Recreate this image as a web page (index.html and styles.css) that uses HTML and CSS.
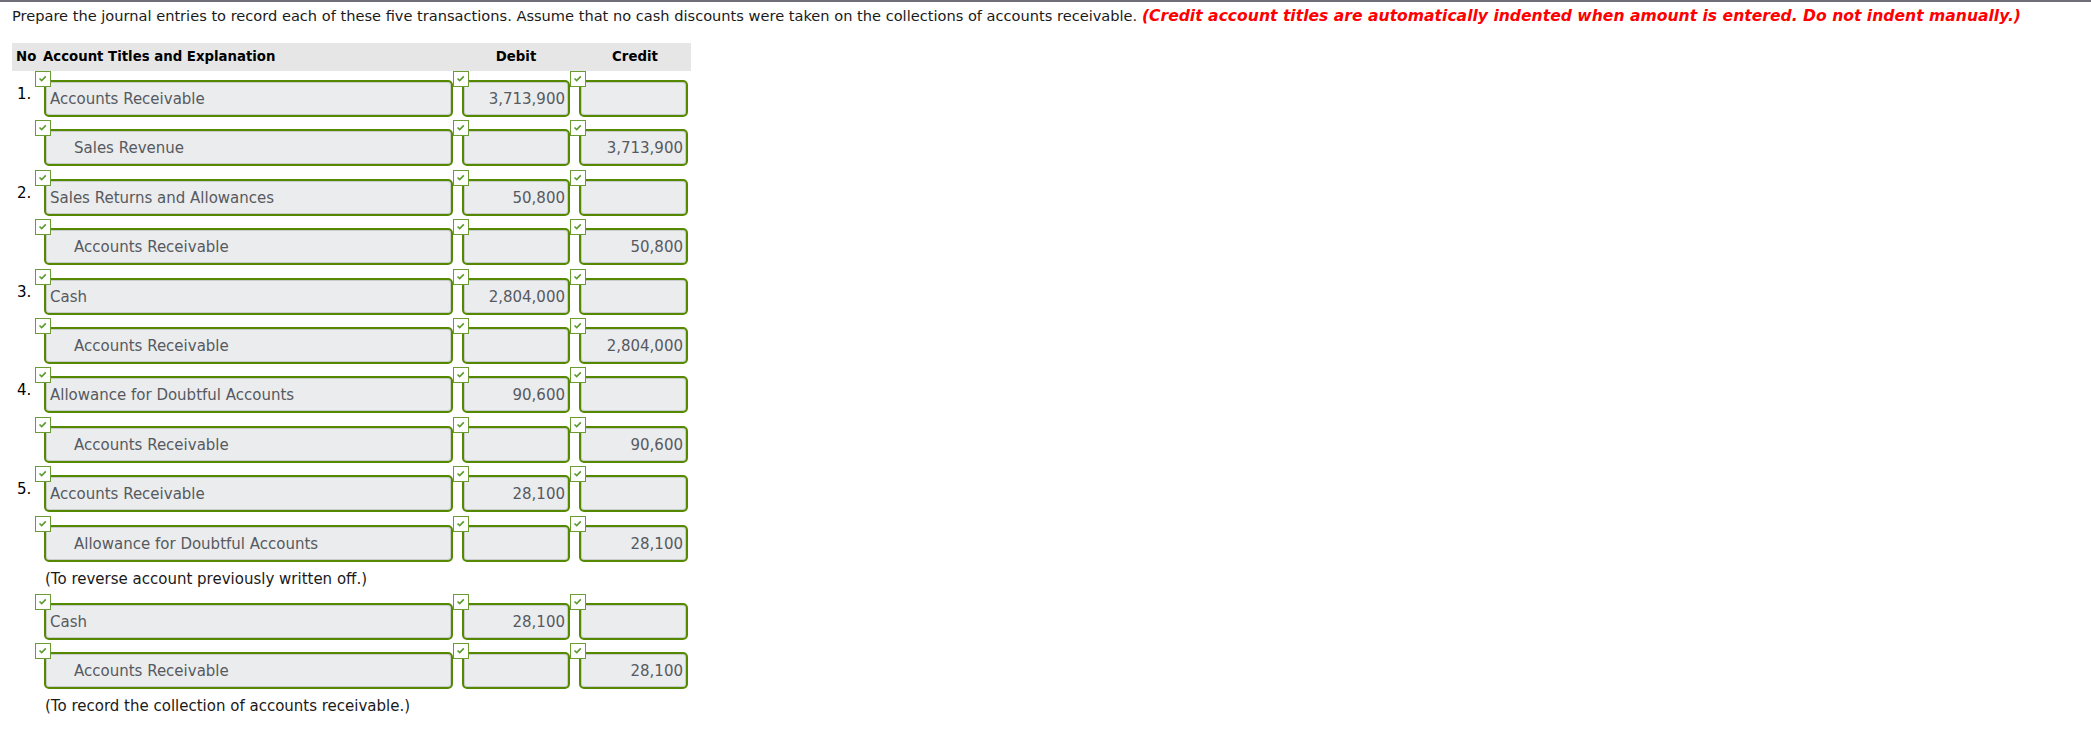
FILE: index.html
```html
<!DOCTYPE html>
<html lang="en">
<head>
    <meta charset="UTF-8">
    <title>Journal Entries</title>
    <link rel="stylesheet" href="styles.css">
</head>
<body>
    <div class="question">
        <p class="intro">Prepare the journal entries to record each of these five transactions. Assume that no cash discounts were taken on the collections of accounts receivable. <em class="warn">(Credit account titles are automatically indented when amount is entered. Do not indent manually.)</em></p>

        <div class="journal">
            <div class="head">
                <span>No</span>
                <span>Account Titles and Explanation</span>
                <span class="amt-head">Debit</span>
                <span class="amt-head">Credit</span>
            </div>

            <!-- 1 -->
            <div class="row">
                <span class="no">1.</span>
                <div class="cell"><svg class="check" viewBox="0 0 16 16"><rect x="0.5" y="0.5" width="15" height="15"/><polyline points="4.5,7.5 6.7,9.6 10.8,5.4"/></svg><div class="field acct">Accounts Receivable</div></div>
                <div class="cell"><svg class="check" viewBox="0 0 16 16"><rect x="0.5" y="0.5" width="15" height="15"/><polyline points="4.5,7.5 6.7,9.6 10.8,5.4"/></svg><div class="field num">3,713,900</div></div>
                <div class="cell"><svg class="check" viewBox="0 0 16 16"><rect x="0.5" y="0.5" width="15" height="15"/><polyline points="4.5,7.5 6.7,9.6 10.8,5.4"/></svg><div class="field num credit"></div></div>
            </div>
            <div class="row">
                <span class="no"></span>
                <div class="cell"><svg class="check" viewBox="0 0 16 16"><rect x="0.5" y="0.5" width="15" height="15"/><polyline points="4.5,7.5 6.7,9.6 10.8,5.4"/></svg><div class="field acct cr">Sales Revenue</div></div>
                <div class="cell"><svg class="check" viewBox="0 0 16 16"><rect x="0.5" y="0.5" width="15" height="15"/><polyline points="4.5,7.5 6.7,9.6 10.8,5.4"/></svg><div class="field num"></div></div>
                <div class="cell"><svg class="check" viewBox="0 0 16 16"><rect x="0.5" y="0.5" width="15" height="15"/><polyline points="4.5,7.5 6.7,9.6 10.8,5.4"/></svg><div class="field num credit">3,713,900</div></div>
            </div>

            <!-- 2 -->
            <div class="row">
                <span class="no">2.</span>
                <div class="cell"><svg class="check" viewBox="0 0 16 16"><rect x="0.5" y="0.5" width="15" height="15"/><polyline points="4.5,7.5 6.7,9.6 10.8,5.4"/></svg><div class="field acct">Sales Returns and Allowances</div></div>
                <div class="cell"><svg class="check" viewBox="0 0 16 16"><rect x="0.5" y="0.5" width="15" height="15"/><polyline points="4.5,7.5 6.7,9.6 10.8,5.4"/></svg><div class="field num">50,800</div></div>
                <div class="cell"><svg class="check" viewBox="0 0 16 16"><rect x="0.5" y="0.5" width="15" height="15"/><polyline points="4.5,7.5 6.7,9.6 10.8,5.4"/></svg><div class="field num credit"></div></div>
            </div>
            <div class="row">
                <span class="no"></span>
                <div class="cell"><svg class="check" viewBox="0 0 16 16"><rect x="0.5" y="0.5" width="15" height="15"/><polyline points="4.5,7.5 6.7,9.6 10.8,5.4"/></svg><div class="field acct cr">Accounts Receivable</div></div>
                <div class="cell"><svg class="check" viewBox="0 0 16 16"><rect x="0.5" y="0.5" width="15" height="15"/><polyline points="4.5,7.5 6.7,9.6 10.8,5.4"/></svg><div class="field num"></div></div>
                <div class="cell"><svg class="check" viewBox="0 0 16 16"><rect x="0.5" y="0.5" width="15" height="15"/><polyline points="4.5,7.5 6.7,9.6 10.8,5.4"/></svg><div class="field num credit">50,800</div></div>
            </div>

            <!-- 3 -->
            <div class="row">
                <span class="no">3.</span>
                <div class="cell"><svg class="check" viewBox="0 0 16 16"><rect x="0.5" y="0.5" width="15" height="15"/><polyline points="4.5,7.5 6.7,9.6 10.8,5.4"/></svg><div class="field acct">Cash</div></div>
                <div class="cell"><svg class="check" viewBox="0 0 16 16"><rect x="0.5" y="0.5" width="15" height="15"/><polyline points="4.5,7.5 6.7,9.6 10.8,5.4"/></svg><div class="field num">2,804,000</div></div>
                <div class="cell"><svg class="check" viewBox="0 0 16 16"><rect x="0.5" y="0.5" width="15" height="15"/><polyline points="4.5,7.5 6.7,9.6 10.8,5.4"/></svg><div class="field num credit"></div></div>
            </div>
            <div class="row">
                <span class="no"></span>
                <div class="cell"><svg class="check" viewBox="0 0 16 16"><rect x="0.5" y="0.5" width="15" height="15"/><polyline points="4.5,7.5 6.7,9.6 10.8,5.4"/></svg><div class="field acct cr">Accounts Receivable</div></div>
                <div class="cell"><svg class="check" viewBox="0 0 16 16"><rect x="0.5" y="0.5" width="15" height="15"/><polyline points="4.5,7.5 6.7,9.6 10.8,5.4"/></svg><div class="field num"></div></div>
                <div class="cell"><svg class="check" viewBox="0 0 16 16"><rect x="0.5" y="0.5" width="15" height="15"/><polyline points="4.5,7.5 6.7,9.6 10.8,5.4"/></svg><div class="field num credit">2,804,000</div></div>
            </div>

            <!-- 4 -->
            <div class="row">
                <span class="no">4.</span>
                <div class="cell"><svg class="check" viewBox="0 0 16 16"><rect x="0.5" y="0.5" width="15" height="15"/><polyline points="4.5,7.5 6.7,9.6 10.8,5.4"/></svg><div class="field acct">Allowance for Doubtful Accounts</div></div>
                <div class="cell"><svg class="check" viewBox="0 0 16 16"><rect x="0.5" y="0.5" width="15" height="15"/><polyline points="4.5,7.5 6.7,9.6 10.8,5.4"/></svg><div class="field num">90,600</div></div>
                <div class="cell"><svg class="check" viewBox="0 0 16 16"><rect x="0.5" y="0.5" width="15" height="15"/><polyline points="4.5,7.5 6.7,9.6 10.8,5.4"/></svg><div class="field num credit"></div></div>
            </div>
            <div class="row">
                <span class="no"></span>
                <div class="cell"><svg class="check" viewBox="0 0 16 16"><rect x="0.5" y="0.5" width="15" height="15"/><polyline points="4.5,7.5 6.7,9.6 10.8,5.4"/></svg><div class="field acct cr">Accounts Receivable</div></div>
                <div class="cell"><svg class="check" viewBox="0 0 16 16"><rect x="0.5" y="0.5" width="15" height="15"/><polyline points="4.5,7.5 6.7,9.6 10.8,5.4"/></svg><div class="field num"></div></div>
                <div class="cell"><svg class="check" viewBox="0 0 16 16"><rect x="0.5" y="0.5" width="15" height="15"/><polyline points="4.5,7.5 6.7,9.6 10.8,5.4"/></svg><div class="field num credit">90,600</div></div>
            </div>

            <!-- 5 -->
            <div class="row">
                <span class="no">5.</span>
                <div class="cell"><svg class="check" viewBox="0 0 16 16"><rect x="0.5" y="0.5" width="15" height="15"/><polyline points="4.5,7.5 6.7,9.6 10.8,5.4"/></svg><div class="field acct">Accounts Receivable</div></div>
                <div class="cell"><svg class="check" viewBox="0 0 16 16"><rect x="0.5" y="0.5" width="15" height="15"/><polyline points="4.5,7.5 6.7,9.6 10.8,5.4"/></svg><div class="field num">28,100</div></div>
                <div class="cell"><svg class="check" viewBox="0 0 16 16"><rect x="0.5" y="0.5" width="15" height="15"/><polyline points="4.5,7.5 6.7,9.6 10.8,5.4"/></svg><div class="field num credit"></div></div>
            </div>
            <div class="row">
                <span class="no"></span>
                <div class="cell"><svg class="check" viewBox="0 0 16 16"><rect x="0.5" y="0.5" width="15" height="15"/><polyline points="4.5,7.5 6.7,9.6 10.8,5.4"/></svg><div class="field acct cr">Allowance for Doubtful Accounts</div></div>
                <div class="cell"><svg class="check" viewBox="0 0 16 16"><rect x="0.5" y="0.5" width="15" height="15"/><polyline points="4.5,7.5 6.7,9.6 10.8,5.4"/></svg><div class="field num"></div></div>
                <div class="cell"><svg class="check" viewBox="0 0 16 16"><rect x="0.5" y="0.5" width="15" height="15"/><polyline points="4.5,7.5 6.7,9.6 10.8,5.4"/></svg><div class="field num credit">28,100</div></div>
            </div>
            <div class="memo">(To reverse account previously written off.)</div>

            <div class="row short">
                <span class="no"></span>
                <div class="cell"><svg class="check" viewBox="0 0 16 16"><rect x="0.5" y="0.5" width="15" height="15"/><polyline points="4.5,7.5 6.7,9.6 10.8,5.4"/></svg><div class="field acct">Cash</div></div>
                <div class="cell"><svg class="check" viewBox="0 0 16 16"><rect x="0.5" y="0.5" width="15" height="15"/><polyline points="4.5,7.5 6.7,9.6 10.8,5.4"/></svg><div class="field num">28,100</div></div>
                <div class="cell"><svg class="check" viewBox="0 0 16 16"><rect x="0.5" y="0.5" width="15" height="15"/><polyline points="4.5,7.5 6.7,9.6 10.8,5.4"/></svg><div class="field num credit"></div></div>
            </div>
            <div class="row short">
                <span class="no"></span>
                <div class="cell"><svg class="check" viewBox="0 0 16 16"><rect x="0.5" y="0.5" width="15" height="15"/><polyline points="4.5,7.5 6.7,9.6 10.8,5.4"/></svg><div class="field acct cr">Accounts Receivable</div></div>
                <div class="cell"><svg class="check" viewBox="0 0 16 16"><rect x="0.5" y="0.5" width="15" height="15"/><polyline points="4.5,7.5 6.7,9.6 10.8,5.4"/></svg><div class="field num"></div></div>
                <div class="cell"><svg class="check" viewBox="0 0 16 16"><rect x="0.5" y="0.5" width="15" height="15"/><polyline points="4.5,7.5 6.7,9.6 10.8,5.4"/></svg><div class="field num credit">28,100</div></div>
            </div>
            <div class="memo">(To record the collection of accounts receivable.)</div>
        </div>
    </div>
</body>
</html>
```

FILE: styles.css
```css
body {
    margin: 0;
    font-family: "DejaVu Sans", Verdana, sans-serif;
    color: #1a1a1a;
    background: #fff;
}
.question {
    border-top: 2px solid #6f6f77;
    padding: 4px 12px 0;
}
.intro {
    margin: 0;
    font-size: 14.6px;
    line-height: 20px;
}
.warn {
    color: #ff0000;
    font-size: 15.6px;
    font-weight: bold;
    font-style: italic;
}
.journal {
    margin-top: 17px;
    width: 679px;
}
.head,
.row {
    display: grid;
    grid-template-columns: 23px 418px 117px 121px;
}
.head {
    height: 28px;
    line-height: 28px;
    background-color: #e6e6e6;
    font-size: 13.3px;
    font-weight: bold;
    color: #000;
}
.head span:first-child {
    padding-left: 4px;
}
.head span:nth-child(2) {
    padding-left: 8px;
}
.amt-head {
    padding-left: 9px;
    text-align: center;
}
.row {
    height: 49.4px;
}
.row.short {
    height: 49px;
}
.no {
    padding: 13px 0 0 5px;
    font-size: 15px;
    line-height: 20px;
    color: #000;
}
.cell {
    position: relative;
    padding: 9px 0 0 9px;
}
.check {
    position: absolute;
    top: 0;
    left: 0;
    width: 16px;
    height: 16px;
    z-index: 1;
}
.check rect {
    fill: #fff;
    stroke: #6b9c34;
    stroke-width: 1;
}
.check polyline {
    fill: none;
    stroke: #5b9a2c;
    stroke-width: 1.6;
}
.field {
    box-sizing: border-box;
    height: 37px;
    padding-top: 2px;
    line-height: 31px;
    font-size: 15px;
    color: #565a60;
    background-color: #ebecee;
    border: 2px solid #558a00;
    border-radius: 5px;
    box-shadow: inset 0 0 0 1px #c9cbcd;
    white-space: nowrap;
}
.acct {
    padding-left: 4px;
}
.acct.cr {
    padding-left: 28px;
}
.num {
    width: 108px;
    padding-right: 3px;
    text-align: right;
}
.num.credit {
    width: 109px;
}
.memo {
    height: 29px;
    line-height: 29px;
    padding-left: 33px;
    font-size: 15px;
    color: #1a1a1a;
}
```
